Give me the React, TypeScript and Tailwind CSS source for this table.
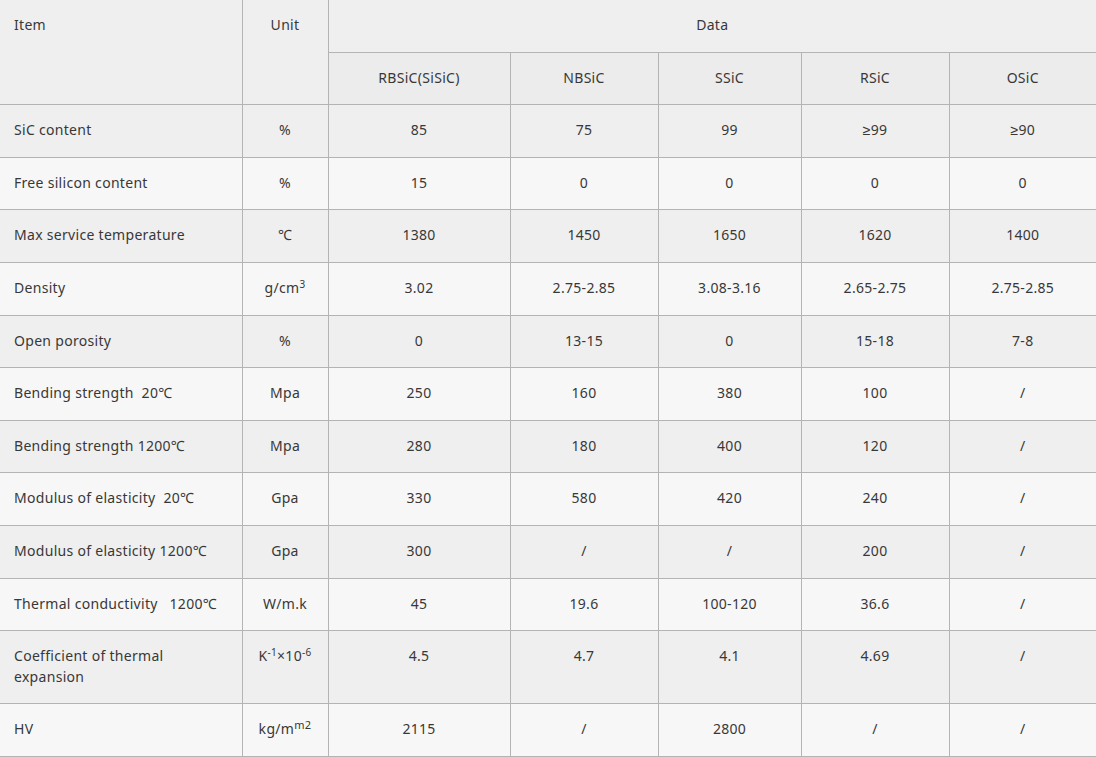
const COLS = ['RBSiC(SiSiC)', 'NBSiC', 'SSiC', 'RSiC', 'OSiC'];

type Row = { item: React.ReactNode; unit: React.ReactNode; vals: string[] };

const ROWS: Row[] = [
  { item: 'SiC content', unit: '%', vals: ['85', '75', '99', '≥99', '≥90'] },
  { item: 'Free silicon content', unit: '%', vals: ['15', '0', '0', '0', '0'] },
  { item: 'Max service temperature', unit: '℃', vals: ['1380', '1450', '1650', '1620', '1400'] },
  {
    item: 'Density',
    unit: (
      <>
        g/cm<sup className="text-[10px]">3</sup>
      </>
    ),
    vals: ['3.02', '2.75-2.85', '3.08-3.16', '2.65-2.75', '2.75-2.85'],
  },
  { item: 'Open porosity', unit: '%', vals: ['0', '13-15', '0', '15-18', '7-8'] },
  { item: 'Bending strength  20℃', unit: 'Mpa', vals: ['250', '160', '380', '100', '/'] },
  { item: 'Bending strength 1200℃', unit: 'Mpa', vals: ['280', '180', '400', '120', '/'] },
  { item: 'Modulus of elasticity  20℃', unit: 'Gpa', vals: ['330', '580', '420', '240', '/'] },
  { item: 'Modulus of elasticity 1200℃', unit: 'Gpa', vals: ['300', '/', '/', '200', '/'] },
  { item: 'Thermal conductivity   1200℃', unit: 'W/m.k', vals: ['45', '19.6', '100-120', '36.6', '/'] },
  {
    item: (
      <>
        Coefficient of thermal
        <br />
        expansion
      </>
    ),
    unit: (
      <>
        K<sup className="text-[10px]">-1</sup>×10<sup className="text-[10px]">-6</sup>
      </>
    ),
    vals: ['4.5', '4.7', '4.1', '4.69', '/'],
  },
  {
    item: 'HV',
    unit: (
      <>
        kg/m<sup className="text-[11px]">m2</sup>
      </>
    ),
    vals: ['2115', '/', '2800', '/', '/'],
  },
];

const cell = 'align-top pt-[15px] pb-[16px] border-[#b4b4b4]';

export default function App() {
  return (
    <div className="w-[1096px] h-[757px] overflow-hidden bg-[#f7f7f7] text-[#383838] text-[14px] leading-[20.6px] tracking-[0.3px] font-['Noto_Sans',sans-serif]">
      <table className="w-[1096px] table-fixed border-collapse">
        <colgroup>
          <col className="w-[242px]" />
          <col className="w-[86px]" />
          <col className="w-[182px]" />
          <col className="w-[148px]" />
          <col className="w-[143px]" />
          <col className="w-[148px]" />
          <col className="w-[147px]" />
        </colgroup>
        <thead>
          <tr className="bg-[#efefef]">
            <th rowSpan={2} className={`${cell} font-normal text-left pl-[14px] border-r border-b`}>
              Item
            </th>
            <th rowSpan={2} className={`${cell} font-normal text-center border-r border-b`}>
              Unit
            </th>
            <th colSpan={5} className={`${cell} font-normal text-center border-b pb-[14px]`}>
              Data
            </th>
          </tr>
          <tr className="bg-[#ececec]">
            {COLS.map((c, i) => (
              <th
                key={c}
                className={`${cell} font-normal text-center border-b ${i < COLS.length - 1 ? 'border-r' : ''}`}
              >
                {c}
              </th>
            ))}
          </tr>
        </thead>
        <tbody>
          {ROWS.map((r, ri) => (
            <tr key={ri} className={ri % 2 === 0 ? 'bg-[#efefef]' : 'bg-[#f7f7f7]'}>
              <td className={`${cell} text-left pl-[14px] border-r border-b`}>
                <span className="whitespace-pre">{r.item}</span>
              </td>
              <td className={`${cell} text-center border-r border-b`}>{r.unit}</td>
              {r.vals.map((v, i) => (
                <td key={i} className={`${cell} text-center border-b ${i < r.vals.length - 1 ? 'border-r' : ''}`}>
                  {v}
                </td>
              ))}
            </tr>
          ))}
        </tbody>
      </table>
    </div>
  );
}
